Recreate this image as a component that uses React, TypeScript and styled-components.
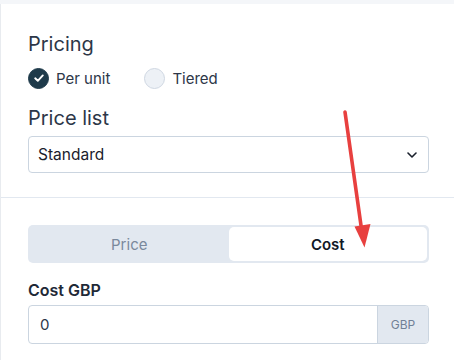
import React from "react";
import styled, { createGlobalStyle } from "styled-components";

const Global = createGlobalStyle`
  html, body { margin: 0; padding: 0; background: #f4f6f9; }
  body { font-family: Inter, "Noto Sans", sans-serif; color: #2d3748; }
  * { box-sizing: border-box; }
`;

const Page = styled.div`
  position: relative;
  width: 454px;
  height: 360px;
  padding-top: 4px;
  overflow: hidden;
`;

const Panel = styled.div`
  background: #ffffff;
  border-left: 1px solid #e8ebef;
  height: 356px;
`;

const Section = styled.section<{ $top: number; $bottom: number; $divider?: boolean }>`
  padding: ${(p) => p.$top}px 25px ${(p) => p.$bottom}px 27px;
  border-bottom: ${(p) => (p.$divider ? "1px solid #e2e8f0" : "none")};
`;

const Heading = styled.div<{ $mt?: number }>`
  font-size: 20px;
  line-height: 24px;
  font-weight: 400;
  color: #2d3748;
  margin-top: ${(p) => p.$mt ?? 0}px;
`;

const RadioRow = styled.div`
  display: flex;
  align-items: center;
  height: 22px;
  margin-top: 11px;
  gap: 34px;
`;

const RadioOption = styled.label`
  display: flex;
  align-items: center;
  gap: 7px;
  font-size: 15px;
  color: #2d3748;
`;

const RadioDot = styled.span<{ $checked?: boolean }>`
  width: 21px;
  height: 21px;
  border-radius: 50%;
  display: inline-flex;
  align-items: center;
  justify-content: center;
  background: ${(p) => (p.$checked ? "#1e3a4a" : "#edf1f6")};
  border: 1px solid ${(p) => (p.$checked ? "#1e3a4a" : "#cfd7e2")};
`;

const Select = styled.div`
  margin-top: 6px;
  height: 37px;
  border: 1px solid #cbd5e0;
  border-radius: 4px;
  display: flex;
  align-items: center;
  justify-content: space-between;
  padding: 0 11px 0 9px;
  font-size: 15.5px;
  color: #1a202c;
`;

const Segmented = styled.div`
  display: grid;
  grid-template-columns: 1fr 1fr;
  height: 38px;
  padding: 2px;
  background: #e2e8f0;
  border-radius: 5px;
`;

const Segment = styled.div<{ $active?: boolean }>`
  display: flex;
  align-items: center;
  justify-content: center;
  font-size: 15px;
  border-radius: 5px;
  background: ${(p) => (p.$active ? "#ffffff" : "transparent")};
  color: ${(p) => (p.$active ? "#111827" : "#7a889c")};
  font-weight: ${(p) => (p.$active ? 600 : 400)};
`;

const FieldLabel = styled.div`
  margin-top: 17px;
  font-size: 16px;
  line-height: 20px;
  font-weight: 600;
  color: #1f2937;
`;

const InputGroup = styled.div`
  margin-top: 5px;
  height: 39px;
  display: flex;
  border: 1px solid #cbd5e0;
  border-radius: 4px;
  overflow: hidden;
`;

const InputText = styled.div`
  flex: 1;
  display: flex;
  align-items: center;
  padding-left: 11px;
  font-size: 15px;
  color: #2d3748;
`;

const Addon = styled.div`
  width: 51px;
  display: flex;
  align-items: center;
  justify-content: center;
  background: #e2e8f0;
  border-left: 1px solid #cbd5e0;
  font-size: 12px;
  color: #718096;
`;

const ArrowLayer = styled.svg`
  position: absolute;
  left: 0;
  top: 0;
  pointer-events: none;
`;

export default function App() {
  return (
    <>
      <Global />
      <Page>
        <Panel>
          <Section $top={28} $bottom={24} $divider>
            <Heading>Pricing</Heading>
            <RadioRow>
              <RadioOption>
                <RadioDot $checked>
                  <svg width="12" height="12" viewBox="0 0 12 12">
                    <polyline points="2.2,6.3 4.8,8.8 9.8,3.4" fill="none" stroke="#fff" strokeWidth="1.9" strokeLinecap="round" strokeLinejoin="round" />
                  </svg>
                </RadioDot>
                Per unit
              </RadioOption>
              <RadioOption>
                <RadioDot />
                Tiered
              </RadioOption>
            </RadioRow>
            <Heading $mt={17}>Price list</Heading>
            <Select>
              <span>Standard</span>
              <svg width="10" height="6" viewBox="0 0 10 6">
                <polyline points="1,1 5,5 9,1" fill="none" stroke="#1a202c" strokeWidth="1.6" strokeLinecap="round" strokeLinejoin="round" />
              </svg>
            </Select>
          </Section>
          <Section $top={27} $bottom={0}>
            <Segmented>
              <Segment>Price</Segment>
              <Segment $active>Cost</Segment>
            </Segmented>
            <FieldLabel>Cost GBP</FieldLabel>
            <InputGroup>
              <InputText>0</InputText>
              <Addon>GBP</Addon>
            </InputGroup>
          </Section>
        </Panel>
        <ArrowLayer width="454" height="360" viewBox="0 0 454 360">
          <line x1="345" y1="112" x2="361.5" y2="229" stroke="#e8403f" strokeWidth="3.6" strokeLinecap="round" />
          <polygon points="364.5,247.5 354.5,226.5 370.5,224" fill="#e8403f" />
        </ArrowLayer>
      </Page>
    </>
  );
}
